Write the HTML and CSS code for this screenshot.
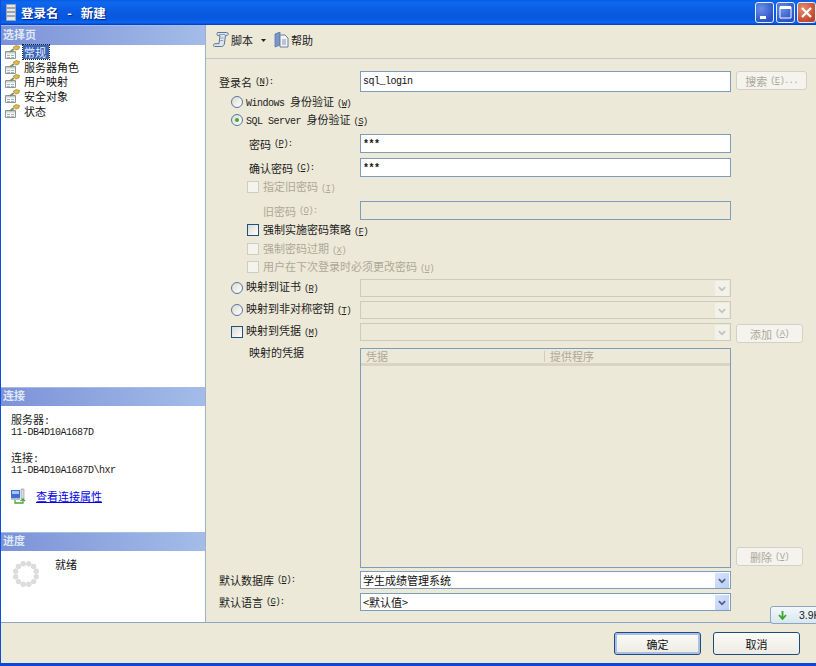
FILE: index.html
```html
<!DOCTYPE html>
<html lang="zh-CN">
<head>
<meta charset="utf-8">
<title>登录名 - 新建</title>
<link rel="stylesheet" href="styles.css">
</head>
<body>
<svg class="defs" width="0" height="0" aria-hidden="true">
  <defs>
    <symbol id="page-ico" viewBox="0 0 16 14">
      <path d="M1.500 6.500h10v7h-10z" fill="#f6f6f2" stroke="#8a989c"/>
      <path d="M2 7h9v1.500H2z" fill="#c6cfd2"/>
      <path d="M3 10h3v1H3zM7 10h3v1H7zM3 12h3v1H3zM7 12h3v1H7z" fill="#aab4b7"/>
      <path d="M5 6.500 9 3.500l1.500 1.200L7 7.500z" fill="#84905e"/>
      <path d="M9 2.500 12 .6l3.500.8-.7 2.700-3 1z" fill="#e4b93e" stroke="#94842f" stroke-width=".7"/>
    </symbol>
    <symbol id="chev" viewBox="0 0 14 18">
      <path d="M3.500 7 7 10.500 10.500 7" fill="none" stroke="currentColor" stroke-width="2"/>
    </symbol>
  </defs>
</svg>
<div class="window">
  <header class="titlebar">
    <svg class="title-ico" width="10" height="17" viewBox="0 0 10 17"><path d="M.5.500h9v16h-9z" fill="#e4e7ea" stroke="#9aa6b6"/><path d="M1 4h8M1 8h8M1 12h8" stroke="#838f9c" stroke-width="1.500"/></svg>
    <span class="title-text">登录名 - 新建</span>
    <div class="winbtns">
      <div class="winbtn"><svg width="17" height="19" viewBox="0 0 17 19"><path d="M4 13h6v3H4z" fill="#fff"/></svg></div>
      <div class="winbtn"><svg width="17" height="19" viewBox="0 0 17 19"><path d="M3 4h11v11H3z" fill="none" stroke="#fff"/><path d="M3 4.500h11" stroke="#fff" stroke-width="3"/></svg></div>
      <div class="winbtn close"><svg width="17" height="19" viewBox="0 0 17 19"><path d="m4 5 9 9m0-9-9 9" stroke="#fff" stroke-width="2.200" fill="none"/></svg></div>
    </div>
  </header>

  <div class="main">
    <aside class="side">
      <section class="pages">
        <h2 class="side-head first">选择页</h2>
        <ul class="page-list">
          <li class="page-item"><svg class="pi"><use href="#page-ico"/></svg><span class="page-name selected">常规</span></li>
          <li class="page-item"><svg class="pi"><use href="#page-ico"/></svg><span class="page-name">服务器角色</span></li>
          <li class="page-item"><svg class="pi"><use href="#page-ico"/></svg><span class="page-name">用户映射</span></li>
          <li class="page-item"><svg class="pi"><use href="#page-ico"/></svg><span class="page-name">安全对象</span></li>
          <li class="page-item"><svg class="pi"><use href="#page-ico"/></svg><span class="page-name">状态</span></li>
        </ul>
      </section>
      <section class="conn">
        <h2 class="side-head">连接</h2>
        <div class="conn-body">
          <div class="line">服务器<span class="la">:</span></div>
          <div class="line"><span class="la">11-DB4D10A1687D</span></div>
          <div class="line gap">连接<span class="la">:</span></div>
          <div class="line"><span class="la">11-DB4D10A1687D\hxr</span></div>
          <div class="conn-link">
            <svg width="15" height="16" viewBox="0 0 15 16"><path d="M0 2h9v8H0z" fill="#3f6fd0"/><path d="M1 3h7v3H1z" fill="#a9c4f0"/><path d="M0 10h9v2H0z" fill="#b8bcc4"/><path d="M10 1h3v10h-3z" fill="#d8dce0" stroke="#8890a0" stroke-width=".6"/><path d="M4 12v3h8v-3M9.500 13 12 11l2 2" fill="none" stroke="#4aa33a" stroke-width="1.300"/></svg>
            <a class="link" href="#">查看连接属性</a>
          </div>
        </div>
      </section>
      <section class="prog">
        <h2 class="side-head">进度</h2>
        <div class="prog-body">
          <svg class="spinner" width="28" height="28" viewBox="-14 -14 28 28">
            <g fill="#dcdcdc">
              <circle cx="10.300" cy="2.800" r="2.700"/><circle cx="7.600" cy="7.600" r="2.700"/><circle cx="2.800" cy="10.300" r="2.700"/>
              <circle cx="-2.800" cy="10.300" r="2.700"/><circle cx="-7.600" cy="7.600" r="2.700"/><circle cx="-10.300" cy="2.800" r="2.700"/>
              <circle cx="-10.300" cy="-2.800" r="2.700"/><circle cx="-7.600" cy="-7.600" r="2.700"/><circle cx="-2.800" cy="-10.300" r="2.700"/>
              <circle cx="2.800" cy="-10.300" r="2.700"/><circle cx="7.600" cy="-7.600" r="2.700"/><circle cx="10.300" cy="-2.800" r="2.700"/>
            </g>
          </svg>
          <span class="prog-text">就绪</span>
        </div>
      </section>
    </aside>

    <div class="content">
      <div class="toolbar">
        <svg width="17" height="16" viewBox="0 0 17 16"><path d="M4.500.500h9c2 0 2.500 2 1 2.800H12.500L11.500 11c-.2 2-1 3.500-3 3.500h-7c-1.500 0-1.500-2.300.3-2.800H6l1-8H5c-1 0-1.500-2.200-.5-3.200z" fill="#dce5f1" stroke="#5f7590"/><path d="M6 2.500h6M7.500 6h3M7.200 8.500h3" stroke="#8ea1b8"/></svg>
        <span class="tool-label">脚本</span>
        <svg class="caret" width="5" height="3" viewBox="0 0 5 3"><path d="M0 0h5L2.500 3z" fill="#222"/></svg>
        <svg class="help-ico" width="15" height="16" viewBox="0 0 15 16"><path d="M1 2 6 0v13l-5 2z" fill="#7b96cf" stroke="#4d6aa5" stroke-width=".7"/><path d="M6 3h5l3 3v9H6z" fill="#f2f4f8" stroke="#6f7f95"/><path d="M8 8h4M8 10h4M8 12h4" stroke="#8795a8"/></svg>
        <span class="tool-label help">帮助</span>
      </div>

      <form class="form">
        <div class="row h21">
          <label class="lbl">登录名<span class="mn">(<u>N</u>):</span></label>
          <div class="input"><span class="la val">sql_login</span></div>
          <div class="btn-dis search">搜索<span class="mn">(<u>E</u>)...</span></div>
        </div>
        <div class="row h18 mt1 i1"><span class="radio"></span><span class="lb"><span class="la">Windows </span>身份验证<span class="mn">(<u>W</u>)</span></span></div>
        <div class="row h18 i1"><span class="radio on"></span><span class="lb"><span class="la">SQL Server </span>身份验证<span class="mn">(<u>S</u>)</span></span></div>
        <div class="row h19 mt5">
          <label class="lbl sub">密码<span class="mn">(<u>P</u>):</span></label>
          <div class="input"><span class="la val stars">***</span></div>
        </div>
        <div class="row h19 mt5">
          <label class="lbl sub">确认密码<span class="mn">(<u>C</u>):</span></label>
          <div class="input"><span class="la val stars">***</span></div>
        </div>
        <div class="row h18 mt1 i2 dis"><span class="check dim"></span><span class="lb2">指定旧密码<span class="mn">(<u>I</u>)</span></span></div>
        <div class="row h19 mt5 dis">
          <label class="lbl sub2">旧密码<span class="mn">(<u>O</u>):</span></label>
          <div class="input off"></div>
        </div>
        <div class="row h18 mt1 i2"><span class="check"></span><span class="lb2">强制实施密码策略<span class="mn">(<u>F</u>)</span></span></div>
        <div class="row h18 mt1 i2 dis"><span class="check dim"></span><span class="lb2">强制密码过期<span class="mn">(<u>X</u>)</span></span></div>
        <div class="row h18 i2 dis"><span class="check dim"></span><span class="lb2">用户在下次登录时必须更改密码<span class="mn">(<u>U</u>)</span></span></div>
        <div class="row h18 mt3">
          <div class="lbl opt"><span class="radio"></span><span class="lb">映射到证书<span class="mn">(<u>R</u>)</span></span></div>
          <div class="select off"><span class="sel-val"></span><span class="arrow"><svg width="14" height="16"><use href="#chev"/></svg></span></div>
        </div>
        <div class="row h18 mt4">
          <div class="lbl opt"><span class="radio"></span><span class="lb">映射到非对称密钥<span class="mn">(<u>T</u>)</span></span></div>
          <div class="select off"><span class="sel-val"></span><span class="arrow"><svg width="14" height="16"><use href="#chev"/></svg></span></div>
        </div>
        <div class="row h18 mt4">
          <div class="lbl opt"><span class="check sq"></span><span class="lb">映射到凭据<span class="mn">(<u>M</u>)</span></span></div>
          <div class="select off"><span class="sel-val"></span><span class="arrow"><svg width="14" height="16"><use href="#chev"/></svg></span></div>
          <div class="btn-dis small add">添加<span class="mn">(<u>A</u>)</span></div>
        </div>
        <div class="row tablerow">
          <label class="lbl sub top">映射的凭据</label>
          <div class="grid-box">
            <div class="grid-head"><span class="col1">凭据</span><span class="col2">提供程序</span></div>
          </div>
          <div class="btn-dis small bottom">删除<span class="mn">(<u>V</u>)</span></div>
        </div>
        <div class="row h18 mt3">
          <label class="lbl">默认数据库<span class="mn">(<u>D</u>):</span></label>
          <div class="select"><span class="sel-val">学生成绩管理系统</span><span class="arrow"><svg width="14" height="16"><use href="#chev"/></svg></span></div>
        </div>
        <div class="row h18 mt4">
          <label class="lbl">默认语言<span class="mn">(<u>G</u>):</span></label>
          <div class="select"><span class="sel-val">&lt;默认值&gt;</span><span class="arrow"><svg width="14" height="16"><use href="#chev"/></svg></span></div>
        </div>
      </form>
    </div>
  </div>

  <footer class="footer">
    <button class="btn default" type="button">确定</button>
    <button class="btn" type="button">取消</button>
    <div class="badge"><svg width="9" height="9" viewBox="0 0 9 9"><path d="M4.500 0v7M1 4l3.500 4L8 4" fill="none" stroke="#3aa52c" stroke-width="1.800"/></svg><span class="badge-text">3.9K</span></div>
  </footer>
</div>
</body>
</html>
```
FILE: styles.css
```css
* { box-sizing: border-box; }
html, body { margin: 0; padding: 0; }
body {
  width: 816px;
  height: 666px;
  overflow: hidden;
  background: #ece9d8;
  font-family: "Noto Sans CJK SC", "Liberation Sans", sans-serif;
  font-size: 11px;
  line-height: 14px;
  color: #1c1c1c;
}
.defs { display: block; height: 0; }
.la {
  font-family: "Liberation Mono", monospace;
  font-size: 10px;
  letter-spacing: -0.5px;
  white-space: pre;
}
.mn {
  margin-left: 3px;
  font-family: "Liberation Mono", monospace;
  font-size: 9px;
  letter-spacing: -0.8px;
  white-space: pre;
}
u { text-underline-offset: 1px; }

.window {
  width: 816px;
  height: 666px;
  display: flex;
  flex-direction: column;
  border-left: 1px solid #0a50dc;
  border-bottom: 3px solid #0a49d6;
  background: #ece9d8;
  position: relative;
  overflow: hidden;
}

.titlebar {
  height: 25px;
  flex: none;
  margin-left: -1px;
  display: flex;
  align-items: center;
  padding-left: 6px;
  background: linear-gradient(#0a5be4 0, #0d68ee 10%, #0a5ce2 45%, #0757de 75%, #0a66ee 90%, #0338c4 100%);
}
.title-ico { flex: none; }
.title-text {
  margin-left: 5px;
  color: #fff;
  font-size: 12.500px;
  font-weight: 700;
  word-spacing: 6px;
  white-space: pre;
  text-shadow: 1px 1px 1px #02218a;
}
.winbtns { margin-left: auto; display: flex; gap: 2px; }
.winbtn {
  width: 19px;
  height: 21px;
  border: 1px solid #e6edfb;
  border-radius: 3px;
  background: radial-gradient(circle at 30% 30%, #6a8fe8, #2a53c6 75%);
}
.winbtn svg { display: block; }
.winbtn.close { background: radial-gradient(circle at 30% 30%, #e68d72, #c3462a 75%); }

.main { flex: none; height: 597px; display: flex; }

.side {
  width: 205px;
  flex: none;
  display: flex;
  flex-direction: column;
  background: #fff;
  border-right: 1px solid #9eb0cc;
}
.side-head {
  margin: 0;
  height: 19px;
  padding-left: 2px;
  font-size: 11px;
  font-weight: 700;
  line-height: 15px;
  color: #dfe8f8;
  background: linear-gradient(90deg, #7c92d8, #a4bce8);
  border-top: 1px solid #a8bce8;
}
.side-head.first { height: 20px; line-height: 17px; }

.pages { height: 362px; flex: none; }
.page-list { list-style: none; margin: 0; padding: 0; }
.page-item { height: 14.600px; display: flex; align-items: center; padding-left: 3px; color: #111; }
.pi { width: 16px; height: 14px; flex: none; }
.page-name { margin-left: 3px; padding: 0 1px; line-height: 14px; }
.page-name.selected {
  background: #3a64b8;
  color: #e8eefb;
  outline: 1px dotted #222;
  padding: 0 3px 0 1px;
}

.conn { height: 145px; flex: none; }
.conn-body { padding: 8px 0 0 10px; }
.line { height: 11px; line-height: 11px; }
.line.gap { margin-top: 16px; }
.conn-link { display: flex; align-items: center; gap: 10px; margin-top: 14px; height: 16px; }
.link { color: #0000e8; }

.prog { flex: 1; }
.prog-body { display: flex; padding: 9px 0 0 11px; }
.spinner { flex: none; }
.prog-text { margin: -3px 0 0 15px; color: #111; }

.content { flex: 1; display: flex; flex-direction: column; min-width: 0; }
.toolbar {
  height: 34px;
  flex: none;
  display: flex;
  align-items: center;
  padding: 0 0 3px 7px;
  border-bottom: 1px solid #bcc8cc;
}
.tool-label { margin-left: 1px; }
.caret { margin-left: 8px; }
.help-ico { margin-left: 8px; }
.tool-label.help { margin-left: 2px; }

.form { flex: 1; display: flex; flex-direction: column; padding: 12px 0 0 13px; }
.row { display: flex; align-items: center; flex: none; white-space: nowrap; }
.h21 { height: 21px; }
.h19 { height: 19px; }
.h18 { height: 18px; }
.mt1 { margin-top: 1px; }
.mt3 { margin-top: 3px; }
.mt4 { margin-top: 4px; }
.mt5 { margin-top: 5px; }
.i1 { padding-left: 12px; }
.i2 { padding-left: 28px; }
.dis { color: #aca899; }

.lbl { width: 141px; flex: none; display: flex; align-items: center; white-space: nowrap; }
.sub { padding-left: 30px; }
.sub2 { padding-left: 44px; }
.opt { padding-left: 12px; }
.opt .lb { margin-bottom: 2px; }
.lbl.top { align-self: flex-start; margin-top: -3px; }

.lb { margin-left: 3px; }
.lb2 { margin-left: 4px; }

.radio {
  width: 12px;
  height: 12px;
  flex: none;
  display: flex;
  align-items: center;
  justify-content: center;
  border: 1px solid #56789f;
  border-radius: 50%;
  background: linear-gradient(135deg, #dcd9ce, #fff);
}
.radio.on::after {
  content: "";
  width: 4px;
  height: 4px;
  border-radius: 50%;
  background: #3fa83a;
}
.check {
  width: 12px;
  height: 12px;
  flex: none;
  border: 1px solid #1c5180;
  background: linear-gradient(135deg, #dcd9ce, #fff);
}
.check.dim { border-color: #cfcdc2; background: #f4f3ee; }

.input {
  width: 371px;
  height: 100%;
  flex: none;
  display: flex;
  align-items: center;
  padding-left: 2px;
  background: #fff;
  border: 1px solid #7f9db9;
}
.input.off { background: #ece9d8; }
.val { color: #111; }
.stars { padding-top: 3px; font-weight: 700; }

.select {
  width: 371px;
  height: 100%;
  flex: none;
  display: flex;
  align-items: center;
  justify-content: space-between;
  padding: 0 1px 0 2px;
  background: #fff;
  border: 1px solid #7f9db9;
  color: #111;
}
.select.off { background: #ece9d8; border-color: #cdcbbe; }
.arrow {
  width: 14px;
  height: 15px;
  flex: none;
  color: #4d6185;
  background: linear-gradient(135deg, #d8e4fb, #b9cdf7);
}
.arrow svg { display: block; }
.select.off .arrow { color: #c4c3b8; background: #f2f1ea; }

.btn-dis {
  height: 19px;
  margin-left: 5px;
  flex: none;
  display: flex;
  align-items: center;
  justify-content: center;
  color: #aca899;
  background: #f4f3ee;
  border: 1px solid #d3d1c6;
  border-radius: 3px;
}
.search { width: 71px; align-self: flex-start; }
.small { width: 67px; }
.add { align-self: flex-start; margin-top: 1px; }
.bottom { align-self: flex-end; margin-bottom: 2px; }

.tablerow { height: 220px; margin-top: 7px; align-items: flex-start; }
.tablerow .lbl { height: 14px; }
.grid-box {
  width: 371px;
  height: 220px;
  flex: none;
  background: #ece9d8;
  border: 1px solid #7f9db9;
}
.grid-head {
  height: 17px;
  display: flex;
  align-items: center;
  color: #aca899;
  border-bottom: 3px solid #d8d5c6;
}
.col1 { width: 184px; padding-left: 5px; border-right: 1px solid #cfcdc0; height: 11px; line-height: 11px; flex: none; }
.col2 { padding-left: 5px; line-height: 11px; }

.footer {
  flex: 1;
  display: flex;
  align-items: flex-start;
  justify-content: flex-end;
  gap: 12px;
  padding: 9px 16px 0 0;
  border-top: 1px solid #8ea4c0;
}
.btn {
  width: 87px;
  height: 23px;
  padding: 0;
  font: inherit;
  color: #111;
  background: linear-gradient(#fbfbf8, #ecebe3);
  border: 1px solid #1f4a80;
  border-radius: 3px;
}
.btn.default { box-shadow: inset 0 0 0 2px #a9c0e8; }

.badge {
  position: absolute;
  left: 769px;
  top: 606px;
  width: 60px;
  height: 18px;
  display: flex;
  align-items: center;
  padding-left: 7px;
  background: linear-gradient(#f2f8fb, #d7e7f0);
  border: 1px solid #8ea4c0;
  border-radius: 3px;
}
.badge-text {
  margin-left: 12px;
  font-family: "Liberation Sans", sans-serif;
  font-size: 10.500px;
  color: #222;
}
```
